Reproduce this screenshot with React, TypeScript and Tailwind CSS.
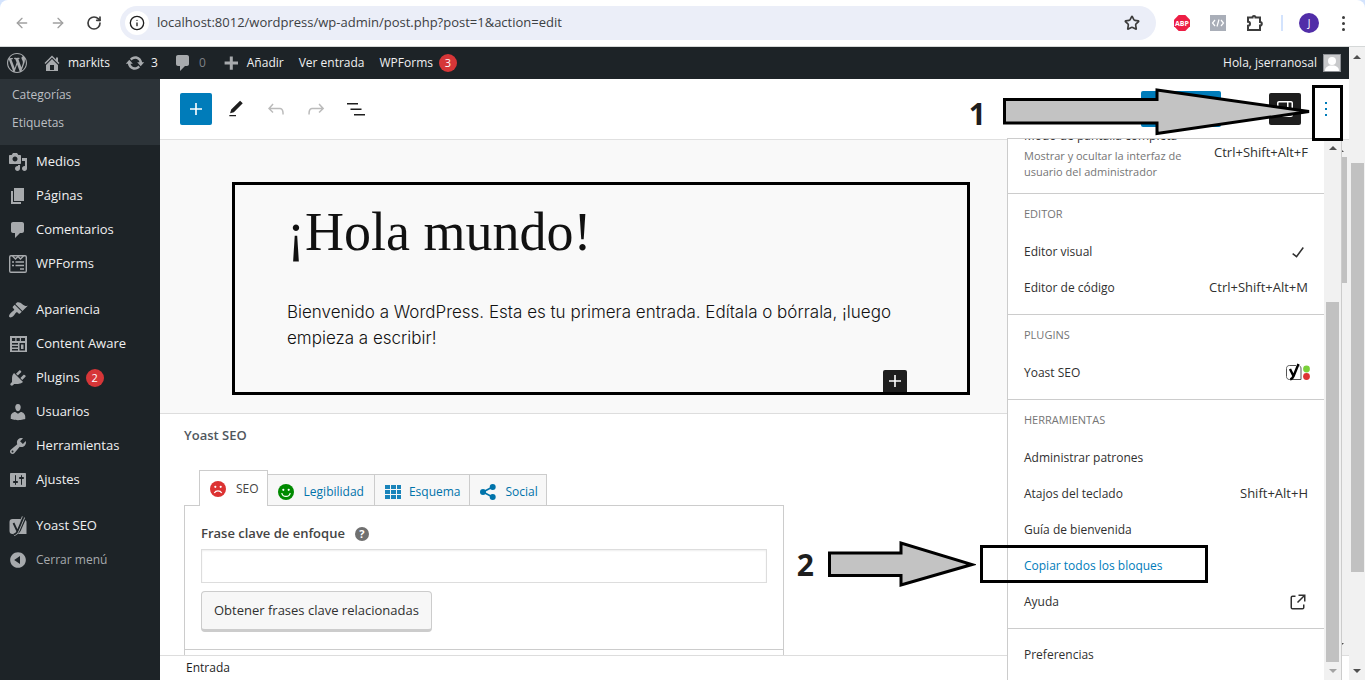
import React from "react";
import { ArrowLeft, ArrowRight, RotateCw, Star, Info } from "lucide-react";

type IconProps = {
  d: string;
  size?: 20 | 24;
  className?: string;
};

type MenuEntry = {
  label: string;
  icon: React.ReactNode;
  count?: number;
  muted?: boolean;
};

type ToolItem = {
  label: string;
  hint?: React.ReactNode;
  active?: boolean;
};

const paths = {
  wordpress:
    "M20 10c0-5.51-4.49-10-10-10C4.48 0 0 4.49 0 10c0 5.52 4.48 10 10 10 5.51 0 10-4.48 10-10zM7.78 15.37L4.37 6.22c.55-.02 1.17-.08 1.17-.08.5-.06.44-1.13-.06-1.11 0 0-1.45.11-2.37.11-.18 0-.37 0-.58-.01C4.12 2.69 6.87 1.11 10 1.11c2.33 0 4.45.87 6.05 2.34-.68-.11-1.65.39-1.65 1.58 0 .74.45 1.36.9 2.1.35.61.55 1.36.55 2.46 0 1.49-1.4 5-1.4 5l-3.03-8.37c.54-.02.82-.17.82-.17.5-.05.44-1.25-.06-1.22 0 0-1.44.12-2.38.12-.87 0-2.33-.12-2.33-.12-.5-.03-.56 1.2-.06 1.22l.92.08 1.26 3.41zM17.41 10c.24-.64.74-1.87.43-4.25.7 1.29 1.05 2.71 1.05 4.25 0 3.29-1.73 6.24-4.4 7.78.97-2.59 1.94-5.2 2.92-7.78zM6.1 18.09C3.12 16.65 1.11 13.53 1.11 10c0-1.3.23-2.48.72-3.59C3.25 10.3 4.67 14.2 6.1 18.09zm4.03-6.63l2.58 6.98c-.86.29-1.76.45-2.71.45-.79 0-1.57-.11-2.29-.33.81-2.38 1.62-4.74 2.42-7.1z",
  home: "M16 8.5l1.53 1.53-1.06 1.06L10 4.6l-6.47 6.49-1.06-1.06L10 2.5l4 4v-2h2v4zm-6-2.46l6 5.99V18H4v-5.97zM12 17v-5H8v5h4z",
  update:
    "M10.2 3.28c3.53 0 6.43 2.61 6.92 6h2.08l-3.5 4-3.5-4h2.32c-.45-1.97-2.21-3.45-4.32-3.45-1.45 0-2.73.71-3.54 1.78L4.95 5.66C6.23 4.2 8.11 3.28 10.2 3.28zm-.4 13.44c-3.52 0-6.43-2.61-6.92-6H.8l3.5-4c1.17 1.33 2.33 2.67 3.5 4H5.48c.45 1.97 2.21 3.45 4.32 3.45 1.45 0 2.73-.71 3.54-1.78l1.71 1.95c-1.28 1.46-3.15 2.38-5.25 2.38z",
  comments:
    "M5 2h9c1.1 0 2 .9 2 2v7c0 1.1-.9 2-2 2h-2l-5 5v-5H5c-1.1 0-2-.9-2-2V4c0-1.1.9-2 2-2z",
  add: "M17 8.6v3h-5.2v5.2h-3v-5.2H3.6v-3h5.2V3.4h3v5.2z",
  media:
    "M13 11V4c0-.55-.45-1-1-1h-1.67L9 1H5L3.67 3H2c-.55 0-1 .45-1 1v7c0 .55.45 1 1 1h10c.55 0 1-.45 1-1zM7 4.5c1.38 0 2.5 1.12 2.5 2.5S8.38 9.5 7 9.5 4.5 8.38 4.5 7 5.62 4.5 7 4.5zM14 6h5v10.5c0 1.38-1.12 2.5-2.5 2.5S14 17.88 14 16.5s1.12-2.5 2.5-2.5c.17 0 .34.02.5.05V9h-3V6zm-4 8.05V13h2v3.5c0 1.38-1.12 2.5-2.5 2.5S7 17.88 7 16.5 8.12 14 9.5 14c.17 0 .34.02.5.05z",
  pages: "M6 15V2h10v13H6zm-1 1h8v2H3V5h2v11z",
  appearance:
    "M14.48 11.06L7.41 3.99l1.5-1.5c.5-.56 2.3-.47 3.51.32 1.21.8 1.43 1.28 2.91 2.1 1.18.64 2.45 1.26 4.45.85zm-.71.71L6.7 4.7 4.93 6.47c-.39.39-.39 1.02 0 1.41l1.06 1.06c.39.39.39 1.03 0 1.42-.6.6-1.43 1.11-2.21 1.69-.35.26-.7.53-1.01.84C1.43 14.23.4 16.08 1.4 17.07c.99 1 2.84-.03 4.18-1.36.31-.31.58-.66.85-1.02.57-.78 1.08-1.61 1.69-2.21.39-.39 1.02-.39 1.41 0l1.06 1.06c.39.39 1.02.39 1.41 0z",
  content:
    "M2 2h17v16H2zM4 4v3h3.3V4zm4.5 0v3h3.3V4zM13 4v3h4V4zM4 9v1.5h6V9zm0 3v1.5h6V12zm0 3v1.5h6V15zm7.5-6v7.5H17V9zm1.5 1.5h2.5V15H13z",
  plugins:
    "M13.11 4.36L9.87 7.6 8 5.73l3.24-3.24c.35-.34 1.05-.2 1.56.32.52.51.66 1.21.31 1.55zm-8 1.77l.91-1.12 9.01 9.01-1.19.84c-.71.71-2.63 1.16-3.82 1.16H6.14L4.9 17.26c-.59.59-1.54.59-2.12 0-.59-.58-.59-1.53 0-2.12l1.24-1.24v-3.88c0-1.13.4-3.19 1.09-3.89zm7.26 3.97l3.24-3.24c.34-.35 1.04-.21 1.55.31.52.51.66 1.21.31 1.55l-3.24 3.25z",
  users:
    "M10 9.25c-2.27 0-2.73-3.44-2.73-3.44C7 4.02 7.82 2 9.97 2c2.16 0 2.98 2.02 2.71 3.81 0 0-.41 3.44-2.68 3.44zm0 2.57L12.72 10c2.39 0 4.52 2.33 4.52 4.53v2.49s-3.65 1.13-7.24 1.13c-3.65 0-7.24-1.13-7.24-1.13v-2.49c0-2.25 1.94-4.48 4.47-4.48z",
  tools:
    "M16.68 9.77c-1.34 1.34-3.3 1.67-4.95.99l-5.41 6.52c-.99.99-2.59.99-3.58 0s-.99-2.59 0-3.57l6.52-5.42c-.68-1.65-.35-3.61.99-4.95 1.28-1.28 3.12-1.62 4.72-1.06l-2.89 2.89 2.82 2.82 2.86-2.87c.53 1.58.18 3.39-1.08 4.65zM3.81 16.21c.4.39 1.04.39 1.43 0 .4-.4.4-1.04 0-1.43-.39-.4-1.03-.4-1.43 0-.39.39-.39 1.03 0 1.43z",
  settings:
    "M18 16V4c0-.55-.45-1-1-1H3c-.55 0-1 .45-1 1v12c0 .55.45 1 1 1h14c.55 0 1-.45 1-1zM8 11h1c.55 0 1 .45 1 1s-.45 1-1 1H8v1.5c0 .28-.22.5-.5.5s-.5-.22-.5-.5V13H6c-.55 0-1-.45-1-1s.45-1 1-1h1V5.5c0-.28.22-.5.5-.5s.5.22.5.5V11zm5-2h-1c-.55 0-1-.45-1-1s.45-1 1-1h1V5.5c0-.28.22-.5.5-.5s.5.22.5.5V7h1c.55 0 1 .45 1 1s-.45 1-1 1h-1v5.5c0 .28-.22.5-.5.5s-.5-.22-.5-.5V9z",
  collapse:
    "M10 2.16c4.33 0 7.84 3.51 7.84 7.84s-3.51 7.84-7.84 7.84S2.16 14.33 2.16 10 5.71 2.16 10 2.16zm2 11.72V6.12L6.18 9.97z",
  plus: "M18 11.2h-5.2V6h-1.6v5.2H6v1.6h5.2V18h1.6v-5.2H18z",
  pencil:
    "M20.1 5.1L16.9 2 6.2 12.7l-1.3 4.4 4.5-1.3L20.1 5.1zM4 20.8h8v-1.5H4v1.5z",
  undo: "M18.3 11.7c-.6-.6-1.4-.9-2.3-.9H6.7l2.9-3.3-1.1-1-4.5 5L8.5 16l1-1-2.7-2.7H16c.5 0 .9.2 1.3.5 1 1 1 3.4 1 4.5v.3h1.5v-.2c0-1.5 0-4.3-1.5-5.7z",
  redo: "M15.6 6.5l-1.1 1 2.9 3.3H8c-.9 0-1.7.3-2.3.9-1.4 1.5-1.4 4.2-1.4 5.6v.2h1.5v-.3c0-1.1 0-3.5 1-4.5.3-.3.7-.5 1.3-.5h9.2L14.5 15l1.1 1.1 4.6-4.6-4.6-5z",
  list: "M3 6h11v1.6H3zM6.5 11.5h11v1.6h-11zM10 17h11v1.6H10z",
  check: "M16.7 7.1l-6.3 8.5-3.3-2.5-.9 1.2 4.5 3.4L17.9 8z",
  external:
    "M19.5 4.5h-7V6h4.44l-5.97 5.97 1.06 1.06L18 7.06v4.44h1.5v-7Zm-13 1a2 2 0 0 0-2 2v10a2 2 0 0 0 2 2h10a2 2 0 0 0 2-2v-3H17v3a.5.5 0 0 1-.5.5h-10a.5.5 0 0 1-.5-.5v-10a.5.5 0 0 1 .5-.5h3V5.5h-3Z",
  sidebar:
    "M18 4H6c-1.1 0-2 .9-2 2v12c0 1.1.9 2 2 2h12c1.1 0 2-.9 2-2V6c0-1.1-.9-2-2-2zm-4 14.5H6c-.3 0-.5-.2-.5-.5V6c0-.3.2-.5.5-.5h8v13zm4.5-.5c0 .3-.2.5-.5.5h-2.5v-13H18c.3 0 .5.2.5.5v12z",
};

const Dash = ({ d, size = 20, className = "" }: IconProps) => (
  <svg
    viewBox={size === 20 ? "0 0 20 20" : "0 0 24 24"}
    width={size}
    height={size}
    fill="currentColor"
    fillRule="evenodd"
    className={`shrink-0 ${className}`}
  >
    <path d={d} />
  </svg>
);

const FormsIcon = () => (
  <svg viewBox="0 0 20 20" width="20" height="20" fill="none" stroke="currentColor" strokeWidth="1.4">
    <rect x="1.7" y="1.7" width="16.6" height="16.6" rx="1.2" />
    <path d="M4.5 2l3 3L10 2.5l2.5 2.5 3-3M7.5 8H16M7.5 11.5H16M12 15h4M4 8h2M4 11.5h2" />
  </svg>
);

const YoastMenuIcon = () => (
  <svg viewBox="0 0 20 20" width="20" height="20">
    <path
      d="M4.5 3H13L8.5 18h-4c-1.9 0-3-1.2-3-3V6c0-1.8 1.1-3 3-3zM17.5 4c.7.5 1 1.2 1 2v12h-9c2.5-1.2 3.2-3 4-5z"
      fill="#a7aaad"
    />
    <path d="M5.5 7L9 14.5M15.5 1L9.8 14.5c-.8 2-1.8 3.5-4 4" fill="none" stroke="#a7aaad" strokeWidth="3.4" />
    <path d="M5.5 7L9 14.5M15.5 1L9.8 14.5c-.8 2-1.8 3.5-4 4" fill="none" stroke="#1d2327" strokeWidth="1.8" />
  </svg>
);

const YoastPluginIcon = () => (
  <svg viewBox="0 0 26 20" width="26" height="20" className="-mr-[3px]">
    <path d="M11 2.5H4.5c-1.8 0-3 1.2-3 3v8c0 1.8 1.2 3 3 3H16V6c0-1.5-.3-2.5-1.5-3.2" fill="#fff" stroke="#555" />
    <path d="M5 6l3.2 6.5M13.5 1L8.6 13c-.7 1.8-1.6 3-3.3 3.5" fill="none" stroke="#000" strokeWidth="2.4" />
    <circle cx="21.5" cy="6" r="3.4" fill="#7ad03a" />
    <circle cx="21.5" cy="13.5" r="3.4" fill="#dc3232" />
  </svg>
);

const Face = ({ happy }: { happy?: boolean }) => (
  <svg viewBox="0 0 16 16" width="16" height="16">
    <circle cx="8" cy="8" r="8" fill={happy ? "#008a00" : "#dc3232"} />
    <circle cx="5.3" cy="5.8" r="1.1" fill="#fff" />
    <circle cx="10.7" cy="5.8" r="1.1" fill="#fff" />
    <path
      d={happy ? "M3.8 9c.8 4.6 7.6 4.6 8.4 0" : "M4.3 12c1.6-2.8 5.8-2.8 7.4 0"}
      fill="none"
      stroke="#fff"
      strokeWidth="1.2"
    />
  </svg>
);

const GridIcon = () => (
  <svg viewBox="0 0 16 14" width="16" height="14" fill="#1a84ba">
    {[0, 5, 10].map((y) =>
      [0, 6, 12].map((x) => <rect key={`${x}-${y}`} x={x} y={y} width="5" height="4" />)
    )}
  </svg>
);

const ShareIcon = () => (
  <svg viewBox="0 0 16 16" width="16" height="16" fill="#0073aa">
    <path d="M12.5 3L3 8l9.5 5" fill="none" stroke="#0073aa" strokeWidth="1.6" />
    <circle cx="12.7" cy="3" r="3" />
    <circle cx="3" cy="8" r="3" />
    <circle cx="12.7" cy="13" r="3" />
  </svg>
);

const Caret = ({ down, color = "#505050" }: { down?: boolean; color?: string }) => (
  <svg viewBox="0 0 8 4" width="8" height="4">
    <path d={down ? "M0 0h8L4 4z" : "M0 4h8L4 0z"} fill={color} />
  </svg>
);

const Badge = ({ count }: { count: number }) => (
  <span className="flex size-[18px] items-center justify-center rounded-full bg-[#d63638] text-[11px] text-white">
    {count}
  </span>
);

const sidebarGroups: MenuEntry[][] = [
  [
    { label: "Medios", icon: <Dash d={paths.media} /> },
    { label: "Páginas", icon: <Dash d={paths.pages} /> },
    { label: "Comentarios", icon: <Dash d={paths.comments} /> },
    { label: "WPForms", icon: <FormsIcon /> },
  ],
  [
    { label: "Apariencia", icon: <Dash d={paths.appearance} /> },
    { label: "Content Aware", icon: <Dash d={paths.content} /> },
    { label: "Plugins", icon: <Dash d={paths.plugins} />, count: 2 },
    { label: "Usuarios", icon: <Dash d={paths.users} /> },
    { label: "Herramientas", icon: <Dash d={paths.tools} /> },
    { label: "Ajustes", icon: <Dash d={paths.settings} /> },
  ],
  [
    { label: "Yoast SEO", icon: <YoastMenuIcon /> },
    { label: "Cerrar menú", icon: <Dash d={paths.collapse} />, muted: true },
  ],
];

const toolGroups: { title: string; items: ToolItem[] }[] = [
  {
    title: "EDITOR",
    items: [
      { label: "Editor visual", hint: <Dash d={paths.check} size={24} className="-mr-[2px]" /> },
      { label: "Editor de código", hint: "Ctrl+Shift+Alt+M" },
    ],
  },
  {
    title: "PLUGINS",
    items: [{ label: "Yoast SEO", hint: <YoastPluginIcon /> }],
  },
  {
    title: "HERRAMIENTAS",
    items: [
      { label: "Administrar patrones" },
      { label: "Atajos del teclado", hint: "Shift+Alt+H" },
      { label: "Guía de bienvenida" },
      { label: "Copiar todos los bloques", active: true },
      { label: "Ayuda", hint: <Dash d={paths.external} size={24} className="-mr-[2px]" /> },
    ],
  },
];

const BrowserBar = () => (
  <div className="bg-[#d3e3fd]">
    <div className="flex h-[47px] items-center rounded-t-lg border-b border-[#d5d8d8] bg-white px-[14px]">
      <div className="flex w-[106px] items-center gap-5">
        <button aria-label="Atrás" className="text-[#a0a0a0]">
          <ArrowLeft size={16} />
        </button>
        <button aria-label="Adelante" className="text-[#a0a0a0]">
          <ArrowRight size={16} />
        </button>
        <button aria-label="Recargar" className="text-[#3c3c3c]">
          <RotateCw size={16} strokeWidth={2.5} />
        </button>
      </div>
      <div className="flex h-[34px] flex-1 items-center rounded-full bg-[#ebeef8] pr-4 pl-[5px]">
        <span className="flex size-6 items-center justify-center rounded-full bg-white text-[#1f1f1f]">
          <Info size={16} />
        </span>
        <input
          aria-label="Dirección"
          readOnly
          value="localhost:8012/wordpress/wp-admin/post.php?post=1&action=edit"
          className="min-w-0 flex-1 bg-transparent pl-2 text-[13px] text-[#3c4043] outline-none"
        />
        <Star size={16} strokeWidth={2.5} className="text-[#3c3c3c]" />
      </div>
      <div className="flex w-[195px] items-center justify-end">
        <svg viewBox="0 0 16 16" width="16" height="16" className="mr-5">
          <path d="M4.7 0h6.6L16 4.7v6.6L11.3 16H4.7L0 11.3V4.7z" fill="#ed1e45" />
          <text x="8" y="10.5" textAnchor="middle" fontSize="7" fontWeight="700" fill="#fff">
            ABP
          </text>
        </svg>
        <svg viewBox="0 0 16 16" width="16" height="16" className="mr-5">
          <path d="M0 0h16v16H0z" fill="#a9aeb8" />
          <path d="M5 5L2.5 8 5 11M11 5l2.5 3-2.5 3M9 4.5l-2 7" fill="none" stroke="#fff" strokeWidth="1.2" />
        </svg>
        <svg viewBox="0 0 18 18" width="18" height="18" fill="none" stroke="#3c3c3c" strokeWidth="2" className="mr-[17px]">
          <path d="M2 3.5h4.5a1.5 1.5 0 0 1 3 0H14V8a1.8 1.8 0 0 1 0 3.600V16H2v-4.200a2 2 0 0 0 0-4z" />
        </svg>
        <span className="mr-4 h-4 w-[2px] bg-[#d3e3fd]" />
        <span className="mr-4 flex size-5 items-center justify-center rounded-full bg-[#512da8] text-[10px] text-white">
          J
        </span>
        <button aria-label="Menú del navegador" className="flex w-4 flex-col items-center gap-[3px]">
          <span className="size-[3px] rounded-full bg-[#3c3c3c]" />
          <span className="size-[3px] rounded-full bg-[#3c3c3c]" />
          <span className="size-[3px] rounded-full bg-[#3c3c3c]" />
        </button>
      </div>
    </div>
  </div>
);

const AdminBar = () => (
  <div className="flex h-8 shrink-0 items-center gap-[15px] bg-[#1d2327] pr-2 pl-[7px] text-[12px] text-[#f0f0f1]">
    <Dash d={paths.wordpress} className="text-[#a7aaad]" />
    <a href="#sitio" className="flex items-center gap-[6px]">
      <Dash d={paths.home} className="text-[#a7aaad]" />
      markits
    </a>
    <a href="#actualizaciones" className="flex items-center gap-[6px]">
      <Dash d={paths.update} className="text-[#a7aaad]" />3
    </a>
    <a href="#comentarios" className="flex items-center gap-[6px] text-[#7d8186]">
      <Dash d={paths.comments} className="text-[#a7aaad]" />0
    </a>
    <a href="#nuevo" className="flex items-center gap-[6px]">
      <Dash d={paths.add} className="text-[#a7aaad]" />
      Añadir
    </a>
    <a href="#ver">Ver entrada</a>
    <a href="#wpforms" className="flex items-center gap-[6px]">
      WPForms
      <Badge count={3} />
    </a>
    <a href="#perfil" className="ml-auto flex items-center gap-[6px]">
      Hola, jserranosal
      <svg viewBox="0 0 18 18" width="18" height="18">
        <rect x=".5" y=".5" width="17" height="17" fill="#c8c9cb" stroke="#8c8f94" />
        <circle cx="9" cy="7" r="4" fill="#fff" />
        <path d="M2 17c0-4 3-5 5-5.5h4c2 .5 5 1.5 5 5.5z" fill="#fff" />
      </svg>
    </a>
  </div>
);

const Sidebar = () => (
  <nav className="flex w-40 shrink-0 flex-col bg-[#1d2327] text-[13px] text-[#f0f0f1]">
    <div className="flex flex-col bg-[#2c3338] pt-[2px] pb-2 pl-3 text-[12px] text-[#bcbfc3]">
      <a href="#categorias" className="flex h-7 items-center">
        Categorías
      </a>
      <a href="#etiquetas" className="flex h-7 items-center">
        Etiquetas
      </a>
    </div>
    <div className="flex flex-col gap-3">
      {sidebarGroups.map((group, index) => (
        <div key={index} className="flex flex-col">
          {group.map((entry) => (
            <a
              key={entry.label}
              href="#menu"
              className={`flex h-[34px] items-center pl-2 ${entry.muted ? "text-[12px] text-[#a7aaad]" : ""}`}
            >
              <span className="mr-2 text-[#a7aaad]">{entry.icon}</span>
              {entry.label}
              {entry.count && (
                <span className="ml-[6px]">
                  <Badge count={entry.count} />
                </span>
              )}
            </a>
          ))}
        </div>
      ))}
    </div>
  </nav>
);

const Toolbar = () => (
  <div className="flex h-[61px] shrink-0 items-center border-b border-[#e0e0e0] bg-white pr-[6px] pl-5 text-[#1e1e1e]">
    <div className="flex items-center gap-2">
      <button aria-label="Insertar bloque" className="flex size-8 items-center justify-center rounded-xs bg-[#007cba] text-white">
        <Dash d={paths.plus} size={24} />
      </button>
      <button aria-label="Herramientas" className="flex size-8 items-center justify-center">
        <svg viewBox="0 0 24 24" width="20" height="20" fill="currentColor">
          <path d={paths.pencil} />
        </svg>
      </button>
      <button aria-label="Deshacer" className="flex size-8 items-center justify-center text-[#bbb]">
        <Dash d={paths.undo} size={24} />
      </button>
      <button aria-label="Rehacer" className="flex size-8 items-center justify-center text-[#bbb]">
        <Dash d={paths.redo} size={24} />
      </button>
      <button aria-label="Vista de lista" className="flex size-8 items-center justify-center">
        <Dash d={paths.list} size={24} />
      </button>
    </div>
    <div className="ml-auto flex items-center">
      <button aria-label="Actualizar" className="mr-12 h-9 w-20 rounded-xs bg-[#007cba]" />
      <button aria-label="Ajustes" className="mr-[11px] flex size-8 items-center justify-center rounded-xs bg-[#1e1e1e] text-white">
        <Dash d={paths.sidebar} size={24} />
      </button>
      <button
        aria-label="Opciones"
        className="z-10 mt-1 -mb-1 flex h-14 w-[31px] flex-col items-center justify-center gap-1 border-3 border-black bg-white pr-1 pb-2"
      >
        <span className="size-[2px] bg-[#007cba]" />
        <span className="size-[2px] bg-[#007cba]" />
        <span className="size-[2px] bg-[#007cba]" />
      </button>
    </div>
  </div>
);

const Canvas = () => (
  <div className="border-b border-[#ddd] bg-[#f9f9f9] pt-[42px] pr-8 pb-[18px] pl-[72px]">
    <div className="flex h-[213px] max-w-[738px] flex-col border-3 border-black px-[52px] text-[#111]">
      <h1 className="pt-[14px] font-['Liberation_Serif',serif] text-[54px] leading-[66px]">¡Hola mundo!</h1>
      <p className="pt-[34px] font-['Inter',sans-serif] text-[17px] leading-[26px] font-light">
        Bienvenido a WordPress. Esta es tu primera entrada. Edítala o bórrala, ¡luego empieza a escribir!
      </p>
      <button
        aria-label="Añadir bloque"
        className="mt-auto mr-2 flex h-[22px] w-6 items-center justify-center self-end overflow-hidden rounded-t-xs bg-[#1e1e1e] text-white"
      >
        <Dash d={paths.plus} size={24} />
      </button>
    </div>
  </div>
);

const YoastBox = () => (
  <section className="flex min-h-0 flex-1 flex-col overflow-hidden bg-white px-6 text-[13px]">
    <h2 className="flex h-11 shrink-0 items-center font-semibold text-[#50575e]">Yoast SEO</h2>
    <div className="mt-3 flex shrink-0 items-end pl-[15px] text-[12px] text-[#0073aa]">
      <button className="relative z-10 -mb-px flex h-9 items-center gap-[10px] border border-b-0 border-[#ccc] bg-white pr-2 pl-[10px] text-[#444]">
        <Face />
        SEO
      </button>
      <button className="flex h-[31px] items-center gap-[10px] border-t border-r border-[#ccc] bg-[#f7f7f7] px-[10px] pt-1">
        <Face happy />
        Legibilidad
      </button>
      <button className="flex h-[31px] items-center gap-2 border-t border-r border-[#ccc] bg-[#f7f7f7] pt-1 pr-2 pl-[10px]">
        <GridIcon />
        Esquema
      </button>
      <button className="flex h-[31px] items-center gap-[10px] border-t border-r border-[#ccc] bg-[#f7f7f7] pt-1 pr-2 pl-[10px]">
        <ShareIcon />
        Social
      </button>
    </div>
    <div className="max-w-[600px] flex-1 border border-b-0 border-[#ccc]">
      <div className="flex h-[144px] flex-col items-start border-b border-[#ccc] px-4 pt-[18px]">
        <div className="mb-[5px] flex h-5 items-center gap-[10px]">
          <label htmlFor="focus-keyphrase" className="font-semibold text-[#444]">
            Frase clave de enfoque
          </label>
          <span className="flex size-[14px] items-center justify-center rounded-full bg-[#707070] text-[11px] font-bold text-white">
            ?
          </span>
        </div>
        <input
          id="focus-keyphrase"
          className="h-[34px] w-full shrink-0 border border-[#ddd] bg-white px-2 shadow-[inset_0_1px_2px_rgba(0,0,0,0.07)] outline-none"
        />
        <button className="mt-2 h-[41px] shrink-0 rounded-sm border border-b-3 border-[#ccc] bg-[#f7f7f7] px-3 text-[#303030]">
          Obtener frases clave relacionadas
        </button>
      </div>
    </div>
  </section>
);

const InnerScrollbar = () => (
  <div className="flex w-[17px] shrink-0 flex-col items-center bg-[#f1f1f1] py-2 pr-px">
    <Caret />
    <div className="mt-[5px] h-[126px] w-[13px] bg-[#c1c1c1]" />
    <span className="mt-auto">
      <Caret down />
    </span>
  </div>
);

const OptionsPopover = () => (
  <div className="absolute top-[59px] right-[7px] bottom-0 flex w-[335px] border-x border-t border-[#ccc] bg-white text-[12px] text-[#303030]">
    <div className="min-w-0 flex-1 overflow-hidden">
      {/* first entry is scrolled half out of view */}
      <div className="-mt-[13px] flex items-center justify-between border-b border-[#ccc] px-4 pb-[13px]">
        <div className="w-[170px]">
          <p className="leading-5">Modo de pantalla completa</p>
          <p className="mt-[2px] text-[11px] leading-4 text-[#757575]">
            Mostrar y ocultar la interfaz de usuario del administrador
          </p>
        </div>
        <span className="text-[13px]">Ctrl+Shift+Alt+F</span>
      </div>
      {toolGroups.map((group) => (
        <div key={group.title} className="border-b border-[#ccc] pb-2">
          <h3 className="flex h-10 items-center px-4 text-[11px] font-medium text-[#757575]">{group.title}</h3>
          {group.items.map((item) => (
            <button
              key={item.label}
              className={`flex h-9 w-full items-center justify-between px-4 ${item.active ? "text-[#007cba]" : ""}`}
            >
              <span>{item.label}</span>
              {item.hint && <span className="text-[13px]">{item.hint}</span>}
            </button>
          ))}
        </div>
      ))}
      <div className="pt-2">
        <button className="flex h-9 w-full items-center px-4">Preferencias</button>
      </div>
    </div>
    <div className="flex w-[17px] flex-col items-center bg-[#f1f1f1] py-[7px]">
      <Caret />
      <div className="mt-[152px] mb-[7px] w-[13px] flex-1 bg-[#c1c1c1]" />
      <Caret down color="#a3a3a3" />
    </div>
  </div>
);

const Annotations = () => (
  <div className="pointer-events-none text-[30px] font-bold text-[#1e1e1e]">
    <div className="absolute top-2 right-9 z-20 flex items-center gap-4">
      <span className="pt-[2px]">1</span>
      <svg viewBox="0 0 311 50" width="311" height="50">
        <path d="M2.500 12.500H155V3l152 21.500L155 46.500V36H2.500z" fill="#c3c3c3" stroke="#000" strokeWidth="3" />
      </svg>
    </div>
    <div className="absolute top-[461px] right-[141px] flex items-center">
      <span>2</span>
      <svg viewBox="0 0 148 48" width="148" height="48" className="mr-1 ml-[14px]">
        <path d="M1.5 13H73V3l71 21.5L73 45V35.5H1.5z" fill="#c3c3c3" stroke="#000" strokeWidth="3" />
      </svg>
      <div className="h-[38px] w-[228px] border-3 border-black" />
    </div>
  </div>
);

const App = () => {
  return (
    <div className="flex h-screen flex-col overflow-hidden bg-white font-['Open_Sans','Noto_Sans',sans-serif] text-[13px]">
      <BrowserBar />
      <div className="flex min-h-0 flex-1">
        <div className="flex min-w-0 flex-1 flex-col">
          <AdminBar />
          <div className="flex min-h-0 flex-1">
            <Sidebar />
            <main className="relative flex min-w-0 flex-1 flex-col">
              <OptionsPopover />
              <Toolbar />
              <div className="flex min-h-0 flex-1">
                <div className="flex min-w-0 flex-1 flex-col">
                  <Canvas />
                  <YoastBox />
                </div>
                <InnerScrollbar />
              </div>
              <footer className="flex h-[25px] shrink-0 items-center border-t border-[#ddd] bg-white pl-[26px] text-[12px] text-[#1e1e1e]">
                Entrada
              </footer>
              <Annotations />
            </main>
          </div>
        </div>
        <div className="flex w-4 shrink-0 flex-col items-center bg-[#f1f1f1] pt-2 pb-[7px]">
          <Caret />
          <div className="mt-[104px] h-[409px] w-[13px] bg-[#c1c1c1]" />
          <span className="mt-auto flex">
            <Caret down />
          </span>
        </div>
      </div>
    </div>
  );
};

export default App;
